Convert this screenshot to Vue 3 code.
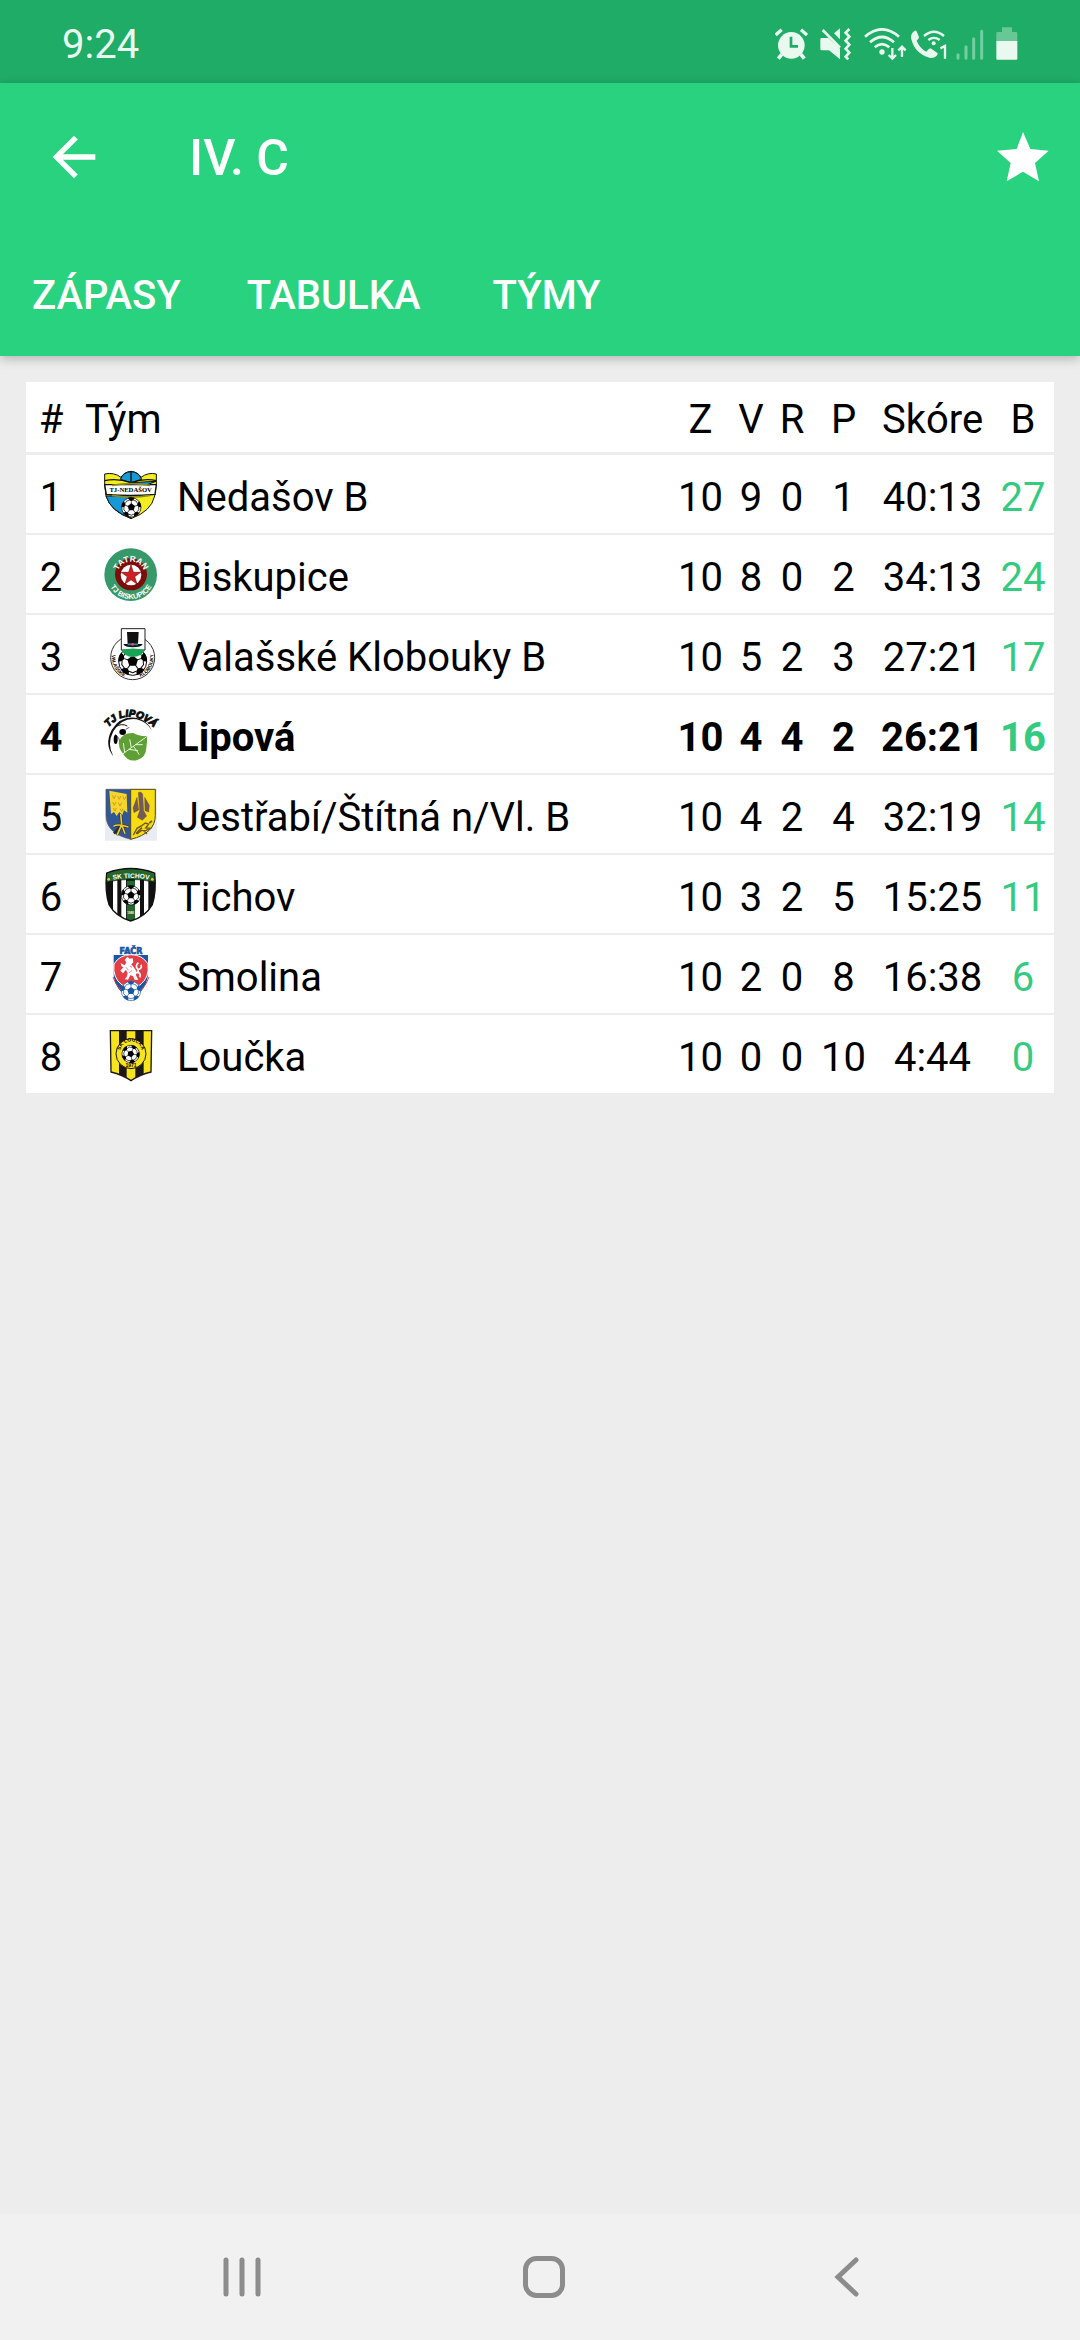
<script setup>
const tabs = ['ZÁPASY', 'TABULKA', 'TÝMY']

const teams = [
  { logo: 'nedasov', name: 'Nedašov B', z: 10, v: 9, r: 0, p: 1, score: '40:13', b: 27 },
  { logo: 'biskupice', name: 'Biskupice', z: 10, v: 8, r: 0, p: 2, score: '34:13', b: 24 },
  { logo: 'klobouky', name: 'Valašské Klobouky B', z: 10, v: 5, r: 2, p: 3, score: '27:21', b: 17 },
  { logo: 'lipova', name: 'Lipová', z: 10, v: 4, r: 4, p: 2, score: '26:21', b: 16, own: true },
  { logo: 'jestrabi', name: 'Jestřabí/Štítná n/Vl. B', z: 10, v: 4, r: 2, p: 4, score: '32:19', b: 14 },
  { logo: 'tichov', name: 'Tichov', z: 10, v: 3, r: 2, p: 5, score: '15:25', b: 11 },
  { logo: 'facr', name: 'Smolina', z: 10, v: 2, r: 0, p: 8, score: '16:38', b: 6 },
  { logo: 'loucka', name: 'Loučka', z: 10, v: 0, r: 0, p: 10, score: '4:44', b: 0 },
]
</script>

<template>
  <div class="screen">
    <svg class="defs" width="0" height="0" aria-hidden="true">
      <defs>
        <g id="ball-patch">
          <path d="M-10-28Q0-32 10-28L6-21 0-18-6-21Z" />
          <path d="M0-18V-10M6-21 14-19M-6-21-14-19" fill="none" stroke="currentColor" stroke-width="2" />
        </g>
        <g id="ball">
          <circle r="29" fill="#fff" stroke="currentColor" stroke-width="2" />
          <path d="M0-12 11-4 7 9H-7L-11-4Z" />
          <use href="#ball-patch" />
          <use href="#ball-patch" transform="rotate(72)" />
          <use href="#ball-patch" transform="rotate(144)" />
          <use href="#ball-patch" transform="rotate(216)" />
          <use href="#ball-patch" transform="rotate(288)" />
        </g>
      </defs>
    </svg>

    <div class="status">
      <span class="time">9:24</span>
      <div class="status-icons">
        <svg width="33" height="32" viewBox="44 49 99 96" aria-hidden="true">
          <circle cx="93" cy="101" r="40" fill="currentColor" />
          <path d="M46 70 64 54M122 54 140 70" stroke="currentColor" stroke-width="10" />
          <path d="M64 128 54 141M122 128 132 141" stroke="currentColor" stroke-width="11" />
          <path d="M92 75V104H113" fill="none" stroke="#1eac66" stroke-width="8" />
        </svg>
        <svg class="gap-l" width="32" height="32" viewBox="180 49 96 96" aria-hidden="true">
          <path d="M181 83Q181 79 185 79H205L240 111V143L207 116H185Q181 116 181 112ZM222 65 240 50V83Z" fill="currentColor" />
          <path d="M188 55 240 108" stroke="currentColor" stroke-width="8" />
          <path d="M268 52 257 63 268 75 257 87 268 99 257 111 268 123 257 135 265 143" fill="none" stroke="currentColor" stroke-width="8" />
        </svg>
        <svg class="gap-l" width="43" height="32" viewBox="310 49 129 96" aria-hidden="true">
          <path d="M313 75Q364 31 415 75M328 92Q364 60 400 92M342 107Q364 88 386 107" fill="none" stroke="currentColor" stroke-width="8" />
          <circle cx="364" cy="121" r="8" fill="currentColor" />
          <path d="M395 109V139M384 130 395 141 406 130M424 136V107M413 116 424 105 435 116" fill="none" stroke="currentColor" stroke-width="7" />
        </svg>
        <svg class="gap-s" width="36" height="32" viewBox="450 49 108 96" aria-hidden="true">
          <path d="M466 57 474 76Q475 80 467 87 476 110 496 120 505 110 509 110L529 124Q532 127 526 133 518 141 505 138 462 126 451 83 447 67 460 58Q464 55 466 57Z" fill="currentColor" />
          <path d="M489 73Q519 47 549 73M502 85Q519 72 536 85" fill="none" stroke="currentColor" stroke-width="7" />
          <circle cx="518" cy="95" r="6" fill="currentColor" />
          <path d="M538 110 552 103V141" fill="none" stroke="currentColor" stroke-width="7" />
        </svg>
        <svg class="gap-m" width="28" height="32" viewBox="584 49 84 96" aria-hidden="true">
          <path d="M590 129V140M614 105V140M637 81V140M661 59V140" stroke="#74cda0" stroke-width="9" stroke-linecap="round" />
        </svg>
        <svg class="gap-l" width="22" height="33" viewBox="707 48 66 99" aria-hidden="true">
          <path d="M708 90V67Q708 63 712 63H725V49H755V63H767Q771 63 771 67V90Z" fill="#67c795" />
          <path d="M708 90H771V143Q771 146 768 146H711Q708 146 708 143Z" fill="currentColor" />
        </svg>
      </div>
    </div>

    <header class="appbar">
      <div class="toolbar">
        <button type="button" class="icon-btn" aria-label="Zpět">
          <svg width="64" height="64" viewBox="0 0 24 24" aria-hidden="true">
            <path d="M20 11H7.83l5.59-5.59L12 4l-8 8 8 8 1.41-1.41L7.83 13H20v-2z" fill="#fff" />
          </svg>
        </button>
        <h1>IV. C</h1>
        <button type="button" class="icon-btn star" aria-label="Oblíbené">
          <svg width="52" height="50" viewBox="110 92 156 150" aria-hidden="true">
            <path d="M188 92 210 143 265 148 224 185 236 240 188 211 139 240 151 185 110 148 169 143Z" fill="#fff" />
          </svg>
        </button>
      </div>
      <nav class="tabs">
        <a v-for="tab in tabs" :key="tab" href="#">{{ tab }}</a>
      </nav>
    </header>

    <main>
      <table>
        <colgroup>
          <col class="c-rank" /><col /><col class="c-z" /><col class="c-v" /><col class="c-r" /><col class="c-p" />
          <col class="c-score" /><col class="c-b" />
        </colgroup>
        <thead>
          <tr>
            <th>#</th>
            <th class="team-head">Tým</th>
            <th>Z</th>
            <th>V</th>
            <th>R</th>
            <th>P</th>
            <th>Skóre</th>
            <th>B</th>
          </tr>
        </thead>
        <tbody>
          <tr v-for="(t, i) in teams" :key="t.logo" :class="{ own: t.own }">
            <td>{{ i + 1 }}</td>
            <td class="team-cell">
              <div class="team">
                <svg class="logo" viewBox="0 0 159 159" aria-hidden="true">
                  <g v-if="t.logo === 'nedasov'">
                    <path d="M2 18Q30 12 51 28 60 12 81 10 102 12 111 28 132 12 157 18V50L152 84Q142 130 81 152 20 130 6 84L2 50Z" fill="#f5ee1e" stroke="#111" stroke-width="3" />
                    <path d="M49 34Q58 12 81 11 104 12 113 34L81 44ZM81 44 156 40 130 50 81 54ZM6 84H81V150Q20 130 6 84Z" fill="#1699d6" stroke="#111" stroke-width="3" />
                    <path d="M2 38Q40 30 81 44 122 30 157 38M81 10V56" fill="none" stroke="#111" stroke-width="4" />
                    <path d="M2 50H157L153 79Q81 86 7 79Z" fill="#fff" stroke="#111" stroke-width="4" />
                    <path d="M24 52Q81 42 138 52M24 82Q81 92 138 82" fill="none" stroke="#8c8a23" stroke-width="5" />
                    <text x="80" y="73" font-family="Liberation Serif, serif" font-size="20" font-weight="700" text-anchor="middle">TJ-NEDAŠOV</text>
                    <use href="#ball" transform="translate(82 118)" />
                  </g>
                  <g v-else-if="t.logo === 'biskupice'">
                    <circle cx="80" cy="80" r="79" fill="#37996a" />
                    <circle cx="81" cy="79" r="48" fill="#7d0d0b" />
                    <circle cx="81" cy="81" r="31" fill="#fff" />
                    <path d="M81 51 88 73H110L92 86 99 108 81 95 63 108 70 86 52 73H74Z" fill="#cf1f24" stroke="#7d0d0b" stroke-width="2" />
                    <path id="bis-top" d="M40 82A41 41 0 0 1 122 82" fill="none" />
                    <path id="bis-bottom" d="M10 82A71 71 0 0 0 152 82" fill="none" />
                    <g fill="#fff" font-family="Liberation Sans, sans-serif" font-weight="700">
                      <text font-size="25" text-anchor="middle"><textPath href="#bis-top" startOffset="50%">TATRAN</textPath></text>
                      <text font-size="22" text-anchor="middle"><textPath href="#bis-bottom" startOffset="50%">TJ BISKUPICE</textPath></text>
                    </g>
                  </g>
                  <g v-else-if="t.logo === 'klobouky'">
                    <circle cx="86" cy="89" r="66" fill="#fff" stroke="#333" stroke-width="3" />
                    <use href="#ball" transform="translate(86 100) scale(1.45)" />
                    <path d="M52 2H123V66H52Z" fill="#fff" stroke="#222" stroke-width="3" />
                    <path d="M52 67Q86 56 123 67 112 86 86 87 62 86 52 67Z" fill="#19a354" />
                    <path d="M69 12H104L102 48H116Q112 58 86 58 62 58 58 48H71Z" fill="#111" />
                    <path d="M71 46H102V52H71Z" fill="#3e6fa5" />
                    <circle cx="86" cy="49" r="4" fill="#e05a2b" />
                    <path id="klo-left" d="M32 58A62 62 0 0 0 84 151" fill="none" />
                    <path id="klo-right" d="M88 151A62 62 0 0 0 140 58" fill="none" />
                    <g font-family="Liberation Sans, sans-serif" font-size="15" font-weight="700" text-anchor="middle">
                      <text><textPath href="#klo-left" startOffset="50%">VALAŠSKÉ</textPath></text>
                      <text><textPath href="#klo-right" startOffset="50%">KLOBOUKY</textPath></text>
                    </g>
                  </g>
                  <g v-else-if="t.logo === 'lipova'">
                    <path d="M28 145Q0 110 23 66 50 22 98 30 132 38 143 67 130 42 98 34 54 28 28 70 8 108 28 145Z" fill="#111" />
                    <path d="M33 58Q52 44 70 54" fill="none" stroke="#111" stroke-width="3" />
                    <ellipse cx="56" cy="72" rx="10" ry="9" />
                    <ellipse cx="35" cy="94" rx="6" ry="14" />
                    <path d="M33 80Q50 90 46 108M65 64 76 58" fill="none" stroke="#111" stroke-width="2" />
                    <path d="M129 85Q100 84 88 75 54 74 46 100 42 120 55 134 72 164 100 156 126 148 127 120 130 102 129 85Z" fill="#5e9f36" />
                    <path d="M42 148 128 86M62 133 58 105M82 119 77 94M74 124 102 128M94 110 116 110M88 114 106 140" fill="none" stroke="#e9f7dd" stroke-width="3" />
                    <path id="lip" d="M8 64Q72-12 156 64" fill="none" />
                    <text font-family="Liberation Sans, sans-serif" font-size="30" font-weight="700" font-style="italic" stroke="#111" stroke-width="3" text-anchor="middle"><textPath href="#lip" startOffset="50%">TJ LIPOVÁ</textPath></text>
                  </g>
                  <g v-else-if="t.logo === 'jestrabi'">
                    <path d="M3 2H159V158H3Z" fill="#e9ecf3" />
                    <path d="M6 4H80V154Q6 136 6 82Z" fill="#315797" stroke="#555" stroke-width="2" />
                    <path d="M80 4H154V82Q154 136 80 154Z" fill="#f8dc12" stroke="#4a4522" stroke-width="3" />
                    <path d="M16 8 68 18 70 74 60 67 55 81 46 72 38 84 30 72 21 78Z" fill="#f5d62b" />
                    <path d="M25 22 30 32 35 22M41 24 46 34 51 24M57 25 61 35 66 25M26 42 31 52 36 42M43 44 48 54 53 44M28 60 33 69 37 60M48 62 53 70 57 62" fill="none" stroke="#d9962b" stroke-width="3" />
                    <path d="M50 78 53 110M28 115Q42 106 73 117M53 110 39 142M53 110 63 137M52 112 30 137" fill="none" stroke="#292b25" stroke-width="8" />
                    <path d="M50 78 53 110M28 115Q42 106 73 117M53 110 39 142M53 110 63 137" fill="none" stroke="#efcc2b" stroke-width="5" />
                    <path d="M103 14Q110 8 116 18L119 68 128 84 115 97 100 88 107 68ZM99 28 87 60 90 74 104 66ZM122 28 136 52 134 72 123 68Z" fill="#745b58" stroke="#55403c" stroke-width="1" />
                    <path d="M88 141 99 121 113 113 124 105 134 108 125 120 139 121 127 127 111 128 99 138M119 128 129 138" fill="none" stroke="#6d5727" stroke-width="4" />
                    <path d="M96 137 114 119M136 105 144 99" stroke="#6d5727" stroke-width="5" />
                  </g>
                  <g v-else-if="t.logo === 'tichov'">
                    <clipPath id="tichov-shield"><path d="M8 15Q80-12 152 15 158 68 145 110 124 147 80 159 36 147 15 110 2 68 8 15Z" /></clipPath>
                    <g clip-path="url(#tichov-shield)">
                      <path d="M0 0H159V159H0Z" fill="#111" />
                      <path d="M27 24H40V150H27ZM52 24H66V159H52ZM93 24H108V159H93ZM120 24H133V150H120Z" fill="#fff" />
                      <path d="M68 38H93V159H68Z" fill="#24662c" />
                      <path d="M6 13Q80-12 154 13V43Q80 25 6 43Z" fill="#24662c" stroke="#111" stroke-width="2" />
                    </g>
                    <path d="M8 15Q80-12 152 15 158 68 145 110 124 147 80 159 36 147 15 110 2 68 8 15Z" fill="none" stroke="#111" stroke-width="4" />
                    <path id="tich" d="M22 36Q80 24 140 36" fill="none" />
                    <text fill="#fff" font-family="Liberation Sans, sans-serif" font-size="20" font-weight="700" text-anchor="middle"><textPath href="#tich" startOffset="50%">SK TICHOV</textPath></text>
                    <circle cx="14" cy="34" r="4" fill="#d5d734" /><circle cx="145" cy="34" r="4" fill="#d5d734" />
                    <use href="#ball" transform="translate(81 82)" />
                    <text x="80" y="138" fill="#fff" font-family="Liberation Sans, sans-serif" font-size="9" font-weight="700" text-anchor="middle">1980</text>
                  </g>
                  <g v-else-if="t.logo === 'facr'">
                    <path d="M29 21H132V70Q134 106 107 136L81 146 55 136Q26 108 29 70Z" fill="#1957a4" />
                    <path d="M27 87Q41 130 81 145 121 130 135 87" fill="none" stroke="#e33d45" stroke-width="3" />
                    <path d="M30 48Q47 20 81 20 115 20 132 48 137 89 108 111 81 127 54 111 25 89 30 48Z" fill="#e33d45" stroke="#fff" stroke-width="3" />
                    <path d="M70 26 77 32 86 31 88 43 82 49 91 60 97 69 96 82 103 95 92 96 87 84 79 82 72 95 62 94 68 87 71 76 66 65 57 76 49 68 58 58 52 54 50 45 62 52 67 43 62 36Z" fill="#fff" />
                    <path d="M91 75Q108 75 100 62 93 54 103 44M103 64Q115 62 111 50M101 72Q112 77 107 88" fill="none" stroke="#fff" stroke-width="5" />
                    <path d="M66 58 74 67M78 54 84 58M84 67 75 75" stroke="#e33d45" stroke-width="2" />
                    <text x="81" y="17" fill="#1957a4" stroke="#1957a4" stroke-width="2" font-family="DejaVu Sans, sans-serif" font-size="24" font-weight="700" text-anchor="middle">FAČR</text>
                    <g color="#1957a4" fill="#1957a4"><use href="#ball" transform="translate(81 129)" /></g>
                  </g>
                  <g v-else>
                    <clipPath id="loucka-shield"><path d="M19 8H143L141 132Q107 140 81 158 55 140 21 132Z" /></clipPath>
                    <g clip-path="url(#loucka-shield)">
                      <path d="M19 6H144V159H19Z" fill="#f6e51e" />
                      <path d="M45 6H68V159H45ZM94 6H119V159H94Z" fill="#1d1716" />
                    </g>
                    <path d="M19 8H143L141 132Q107 140 81 158 55 140 21 132Z" fill="none" stroke="#1d1716" stroke-width="4" />
                    <circle cx="81" cy="77" r="45" fill="#f6e51e" stroke="#1d1716" stroke-width="3" />
                    <path id="lou" d="M49 72A32 32 0 0 1 113 72" fill="none" />
                    <g font-family="Liberation Sans, sans-serif" font-weight="700" text-anchor="middle">
                      <text font-size="15"><textPath href="#lou" startOffset="50%">SK LOUČKA</textPath></text>
                      <text x="81" y="117" font-size="15">1971</text>
                    </g>
                    <use href="#ball" transform="translate(80 78) rotate(25) scale(.9)" />
                  </g>
                </svg>
                <span class="name">{{ t.name }}</span>
              </div>
            </td>
            <td>{{ t.z }}</td>
            <td>{{ t.v }}</td>
            <td>{{ t.r }}</td>
            <td>{{ t.p }}</td>
            <td>{{ t.score }}</td>
            <td class="points">{{ t.b }}</td>
          </tr>
        </tbody>
      </table>
    </main>

    <nav class="sysnav" aria-label="Systém">
      <button type="button" aria-label="Poslední aplikace">
        <svg width="42" height="42" viewBox="0 0 42 42" aria-hidden="true">
          <path d="M5 4V38M21 4V38M37 4V38" stroke="#8c8c8c" stroke-width="5" stroke-linecap="round" />
        </svg>
      </button>
      <button type="button" aria-label="Domů">
        <svg width="42" height="42" viewBox="0 0 42 42" aria-hidden="true">
          <rect x="2.5" y="2.5" width="37" height="37" rx="11" fill="none" stroke="#8c8c8c" stroke-width="5" />
        </svg>
      </button>
      <button type="button" aria-label="Zpět">
        <svg width="42" height="42" viewBox="0 0 42 42" aria-hidden="true">
          <path d="M30 4 12 21 30 38" fill="none" stroke="#8c8c8c" stroke-width="5" stroke-linecap="round" />
        </svg>
      </button>
    </nav>
  </div>
</template>

<style>
body {
  background: #ededed;
}
</style>

<style scoped>
.screen {
  display: flex;
  flex-direction: column;
  min-height: 100vh;
  background: #ededed;
  color: #000;
  font-family: Roboto, sans-serif;
  font-size: 40px;
}

svg {
  display: block;
  flex: none;
}

.defs {
  position: absolute;
}

button {
  padding: 0;
  border: 0;
  background: none;
}

.status {
  display: flex;
  align-items: center;
  justify-content: space-between;
  height: 83px;
  padding: 4px 62px 0 62px;
  box-sizing: border-box;
  background: #1eac66;
  color: #e9f9f0;
}

.time {
  padding-top: 2px;
}

.status-icons {
  display: flex;
  align-items: center;
}

.gap-s {
  margin-left: 4px;
}

.gap-m {
  margin-left: 9px;
}

.gap-l {
  margin-left: 12px;
}

.appbar {
  background: #29d27e;
  color: #fff;
  box-shadow: 0 3px 10px rgba(0, 0, 0, 0.24);
}

.toolbar {
  display: flex;
  align-items: center;
  height: 147px;
  padding: 0 31px 0 42px;
}

.icon-btn {
  display: flex;
}

.star {
  margin-left: auto;
}

h1 {
  margin: 0 0 0 83px;
  padding-top: 2px;
  font-size: 50px;
  font-weight: 500;
  line-height: 60px;
}

.tabs {
  display: flex;
  gap: 66px;
  height: 126px;
  padding-left: 32px;
  line-height: 132px;
}

.tabs a {
  color: #fff;
  font-weight: 500;
  text-decoration: none;
}

.tabs a:last-child {
  margin-left: 6px;
}

main {
  flex: 1;
  padding: 26px;
}

table {
  width: 100%;
  table-layout: fixed;
  border-spacing: 0;
  background: #fff;
}

.c-rank {
  width: 50px;
}

.c-z {
  width: 63px;
}

.c-v {
  width: 38px;
}

.c-r {
  width: 44px;
}

.c-p {
  width: 59px;
}

.c-score {
  width: 119px;
}

.c-b {
  width: 62px;
}

th,
td {
  box-sizing: border-box;
  height: 80px;
  padding: 8px 0 0;
  border-bottom: 2px solid #ededed;
  font-weight: 400;
  line-height: 48px;
  text-align: center;
  white-space: nowrap;
}

th {
  height: 73px;
  padding-top: 6px;
  border-bottom-width: 3px;
}

tbody tr:last-child td {
  height: 78px;
  border-bottom: 0;
}

th.team-head {
  padding-left: 9px;
  text-align: left;
}

td.team-cell {
  padding-top: 0;
}

.team {
  display: flex;
  align-items: center;
  gap: 20px;
  padding-left: 28px;
}

.logo {
  width: 53px;
  height: 53px;
  overflow: visible;
}

.name {
  padding-top: 8px;
}

.own td {
  font-weight: 700;
}

.points {
  color: #34cb80;
}

.sysnav {
  display: flex;
  height: 126px;
  padding: 0 82px 0 91px;
  background: #f1f1f1;
}

.sysnav button {
  display: flex;
  flex: 1;
  align-items: center;
  justify-content: center;
}
</style>
